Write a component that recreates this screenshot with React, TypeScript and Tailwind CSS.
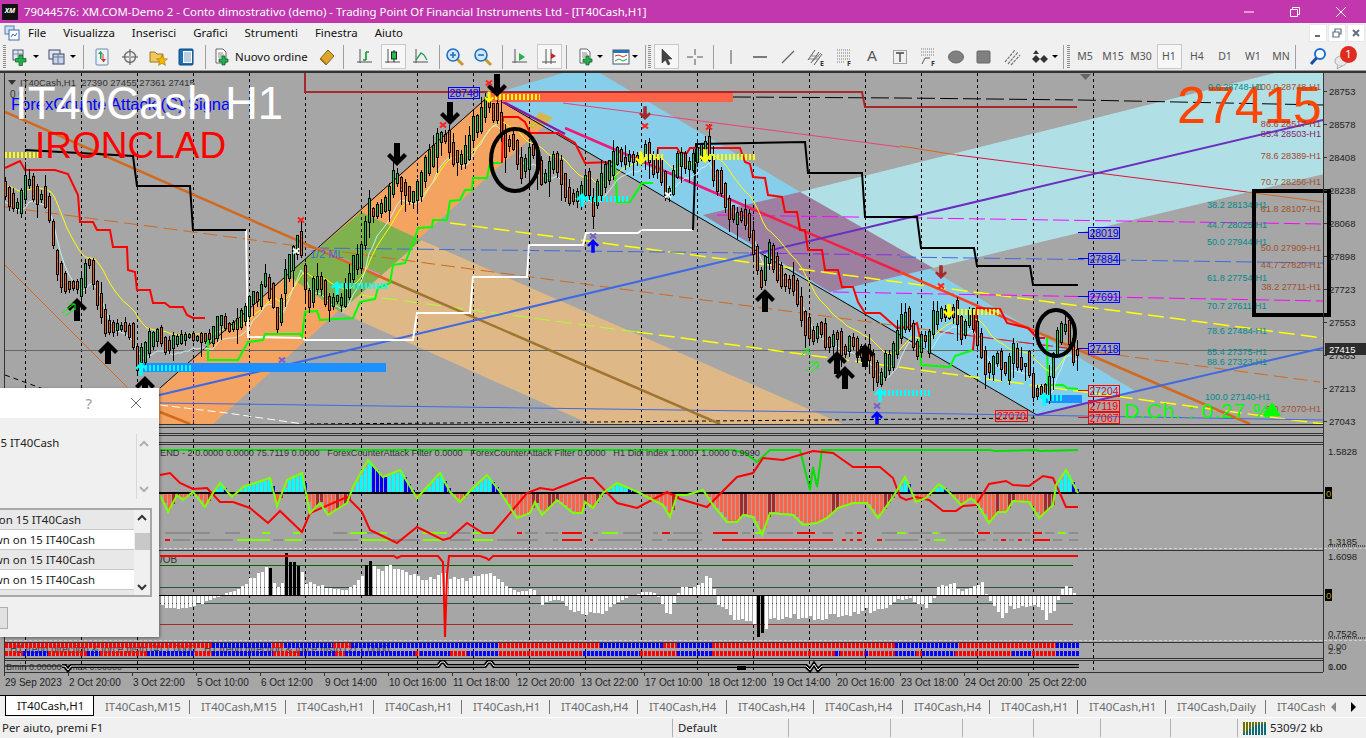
import React from "react";

type P = number[][];
const interp = (pts: P, x: number) => {
  if (x <= pts[0][0]) return pts[0][1];
  for (let i = 1; i < pts.length; i++) {
    if (x <= pts[i][0]) {
      const [a, b] = pts[i - 1];
      const [c, d] = pts[i];
      return b + ((d - b) * (x - a)) / (c - a || 1);
    }
  }
  return pts[pts.length - 1][1];
};
const hash = (n: number) => {
  const s = Math.sin(n * 12.9898) * 43758.5453;
  return s - Math.floor(s);
};
const pl = (p: P) => p.map((q) => q.join(",")).join(" ");

const KP: P = [[5,188],[10,198],[17,205],[22,200],[26,183],[30,182],[38,197],[46,197],[50,212],[53,233],[57,262],[62,278],[68,285],[77,285],[81,287],[89,262],[93,272],[97,293],[102,308],[106,325],[113,327],[122,327],[125,327],[133,335],[137,358],[145,352],[149,342],[157,335],[162,335],[166,348],[173,342],[182,338],[190,335],[197,338],[213,335],[222,318],[230,328],[237,323],[246,313],[253,298],[262,295],[265,280],[273,295],[277,318],[282,308],[286,272],[293,258],[297,245],[302,243],[306,288],[310,302],[315,282],[322,283],[325,292],[330,305],[337,298],[342,302],[350,282],[353,267],[362,255],[366,225],[369,210],[373,212],[382,208],[389,198],[393,182],[397,178],[402,185],[408,192],[413,197],[422,182],[426,165],[433,155],[437,145],[442,135],[450,142],[453,153],[462,160],[469,147],[473,128],[482,118],[485,107],[490,102],[493,112],[498,112],[502,128],[505,145],[509,143],[513,142],[518,155],[521,168],[525,165],[529,158],[533,150],[542,175],[546,178],[553,162],[557,162],[562,175],[566,188],[569,195],[573,197],[582,195],[586,182],[589,183],[593,207],[597,193],[602,182],[606,173],[609,170],[617,155],[621,155],[626,162],[629,158],[633,158],[642,158],[645,150],[649,152],[653,165],[657,165],[661,170],[665,183],[669,192],[673,182],[677,165],[682,157],[685,160],[689,165],[693,162],[697,155],[705,147],[709,148],[713,168],[717,180],[721,182],[725,195],[729,208],[733,212],[737,218],[741,215],[746,217],[749,225],[757,258],[761,278],[765,268],[769,252],[773,257],[777,268],[781,275],[785,280],[789,283],[793,283],[797,292],[801,308],[805,323],[809,328],[813,335],[817,332],[821,328],[825,335],[829,342],[833,340],[837,335],[841,343],[845,350],[849,343],[853,342],[857,348],[865,355],[869,352],[873,365],[877,372],[881,378],[885,365],[889,362],[893,355],[897,342],[902,322],[909,318],[913,335],[917,348],[925,338],[929,342],[933,322],[942,312],[949,315],[953,312],[957,312],[961,328],[965,328],[969,318],[973,318],[977,333],[981,345],[985,362],[989,368],[993,365],[997,358],[1001,360],[1005,368],[1009,368],[1013,353],[1017,358],[1021,363],[1025,365],[1029,363],[1033,385],[1037,392],[1041,390],[1045,390],[1049,388],[1057,342],[1061,333],[1065,328],[1069,332],[1073,350],[1077,352]];

const bars: { x: number; y: number; h: number; up: boolean; t: number; b: number }[] = [];
{
  for (let i = 0, x = 5; x <= 1077; x += 4, i++) {
    const c = interp(KP, x);
    const next = interp(KP, x + 4);
    const prev = interp(KP, x - 4);
    const slope = prev - next;
    const size = Math.max(2, Math.min(24, Math.abs(slope) * 1.1 + 2 + hash(i + 3) * 7));
    const up = Math.abs(slope) > 3 ? slope > 0 : hash(i + 7) > 0.5;
    const y = Math.round(c - size / 2) + 0.5;
    const h = Math.round(size);
    const t = y - 1 - Math.round(hash(i + 11) * 5) - (hash(i + 31) > 0.82 ? 8 : 0);
    const b = y + h + 1 + Math.round(hash(i + 17) * 5) + (hash(i + 47) > 0.82 ? 10 : 0);
    bars.push({ x, y, h, up, t, b });
  }
}
const yellow: P = [];
const pale: P = [];
{
  let e1 = 190;
  let e2 = 190;
  bars.forEach((k) => {
    const c = k.y + k.h / 2;
    e1 = e1 * 0.84 + c * 0.16;
    e2 = e2 * 0.68 + c * 0.32;
    yellow.push([k.x + 2, Math.round(e1 - 4)]);
    pale.push([k.x, Math.round(e2 + 11 + (hash(k.x + 5) - 0.5) * 3)]);
  });
}

const RED1: P = [[5,168],[20,161],[25,170],[55,170],[68,174],[78,195],[80,222],[93,222],[97,230],[110,230],[113,247],[127,247],[128,270],[135,272],[137,290],[150,290],[153,303],[165,303],[170,307],[183,307],[187,315],[193,318],[205,318]];
const RED2: P = [[502,163],[503,117],[518,117],[525,122],[530,133],[558,133],[575,143],[585,163],[613,162]];
const RED3: P = [[657,163],[658,148],[677,148],[680,153],[687,153],[690,148],[740,148],[745,162],[750,164],[753,177],[765,178],[768,195],[782,197],[785,212],[797,212],[800,230],[805,230],[808,250],[822,250],[825,270],[838,270],[842,287],[853,287],[858,302],[865,313],[880,313],[897,328],[910,327],[917,323],[920,338]];
const RED4: P = [[973,350],[977,308],[1000,309],[1007,323],[1028,328],[1037,338],[1045,338]];
const GR1: P = [[208,338],[208,360],[238,360],[248,342],[263,340],[265,334],[300,334],[302,337],[305,312],[317,311],[320,320],[353,318],[360,302],[375,299],[378,288],[390,283],[393,265],[405,263],[415,238],[418,228],[432,227],[433,220],[447,220],[450,201],[460,200],[465,190],[472,190],[473,178],[487,178],[490,163],[502,163]];
const GR2: P = [[615,163],[617,202],[630,202],[642,183],[653,183]];
const GR3: P = [[920,338],[921,365],[950,367],[955,356],[973,350]];
const GR4: P = [[1047,338],[1048,385],[1063,385],[1067,388],[1078,389]];
const WH: P = [[246,230],[248,337],[302,338],[305,340],[413,340],[417,313],[470,313],[473,277],[527,277],[529,245],[583,245],[586,233],[638,233],[642,230],[693,230]];
const BK1: P = [[25,150],[133,156],[137,186],[190,186],[193,230],[246,230]];
const BK2: P = [[693,230],[696,144],[752,143],[805,142],[808,173],[862,173],[865,217],[917,217],[921,248],[974,248],[977,266],[1030,266],[1033,285],[1078,285]];
const DR: P = [[305,71],[305,92],[862,92],[865,107],[1077,107]];

const RL: P = [[160,475],[170,473],[180,483],[193,489],[207,488],[220,502],[233,502],[250,508],[268,523],[280,511],[302,532],[310,513],[347,497],[362,512],[370,530],[397,543],[417,527],[443,540],[450,538],[467,523],[483,533],[493,533],[517,505],[527,493],[540,488],[553,490],[583,478],[593,478],[617,503],[637,508],[667,492],[680,499],[707,507],[737,477],[753,473],[763,458],[783,460],[813,451],[833,453],[853,467],[880,467],[893,478],[900,497],[906,500],[916,497],[929,500],[943,511],[956,511],[963,506],[976,505],[989,484],[1006,481],[1013,485],[1029,486],[1043,476],[1053,478],[1066,507],[1078,507]];
const LL: P = [[160,495],[168,512],[177,495],[183,500],[193,492],[205,507],[213,493],[220,483],[232,497],[243,487],[270,478],[277,506],[282,493],[287,480],[302,473],[310,513],[320,503],[328,515],[347,503],[353,487],[368,460],[383,477],[400,470],[417,498],[440,473],[450,492],[460,502],[473,488],[487,475],[500,492],[517,518],[530,513],[535,502],[542,515],[557,500],[573,513],[582,513],[585,502],[593,508],[603,493],[617,483],[640,493],[647,497],[663,505],[670,517],[677,495],[687,495],[703,490],[713,505],[727,522],[737,522],[743,515],[753,517],[762,535],[770,513],[793,515],[803,525],[817,523],[827,518],[838,508],[853,503],[867,503],[878,518],[893,497],[905,477],[916,502],[926,498],[939,484],[949,492],[961,505],[971,498],[978,505],[989,523],[998,512],[1006,512],[1013,501],[1029,502],[1039,518],[1053,505],[1056,485],[1066,470],[1078,493]];
const TOPG: P = [[160,450],[733,450],[745,453],[757,462],[770,450],[800,450],[810,490],[813,467],[817,487],[822,450],[990,450],[995,451],[1035,450],[1040,451],[1078,450]];

const hist: { x: number; v: number; col: string }[] = [];
{
  let prev = 0;
  for (let x = 160; x <= 1076; x += 4) {
    const v = Math.round((493 - interp(LL, x)) * 0.95);
    let col = "#ff6347";
    if (v >= 0) col = v < prev - 1 ? "#0000ff" : "#00ffff";
    else col = v > prev + 2 ? "#a52a2a" : "#ff6347";
    hist.push({ x, v, col });
    prev = v;
  }
}

const OBV: P = [[160,-10],[170,-15],[200,-8],[215,-3],[225,2],[240,7],[255,22],[265,28],[268,30],[275,6],[280,8],[285,40],[290,32],[298,32],[300,28],[305,10],[312,12],[325,7],[335,5],[345,5],[355,12],[362,18],[365,32],[369,32],[375,27],[385,27],[392,28],[400,24],[410,20],[420,16],[430,16],[440,20],[450,18],[460,14],[475,18],[490,20],[505,10],[515,3],[530,5],[535,6],[540,-10],[550,-5],[560,-5],[570,-15],[580,-18],[590,-20],[600,-20],[610,-12],[620,-5],[640,3],[645,3],[655,2],[660,-8],[665,-17],[670,-17],[675,-2],[680,8],[690,8],[700,10],[708,20],[712,10],[716,-8],[725,-15],[735,-25],[745,-25],[755,-28],[757,-42],[761,-40],[770,-25],[780,-22],[800,-22],[815,-25],[830,-20],[850,-18],[870,-15],[880,-15],[895,-5],[908,-3],[917,-10],[926,-12],[932,-6],[936,7],[952,12],[960,4],[970,7],[975,12],[982,12],[986,-3],[993,-10],[1000,-22],[1010,-10],[1015,-15],[1022,-12],[1035,-10],[1045,-22],[1055,-15],[1060,7],[1066,10],[1072,4],[1075,-3]];
const BLACKX = [268, 285, 289, 293, 297, 365, 369, 757, 761];

const row1 = [[5,212,"r"],[212,272,"b"],[272,284,"r"],[284,333,"b"],[333,351,"r"],[351,499,"b"],[499,600,"r"],[600,663,"b"],[663,677,"r"],[677,712,"b"],[712,895,"r"],[895,959,"b"],[959,1056,"r"],[1056,1080,"b"]] as [number,number,string][];
const row2 = [[5,23,"r"],[23,48,"b"],[48,87,"r"],[87,100,"b"],[100,147,"r"],[147,195,"b"],[195,212,"r"],[212,273,"b"],[273,300,"r"],[300,335,"b"],[335,345,"r"],[345,415,"b"],[415,420,"r"],[420,450,"b"],[450,467,"r"],[467,499,"b"],[499,583,"r"],[583,587,"b"],[587,640,"b"],[640,644,"r"],[644,677,"r"],[677,712,"b"],[712,835,"r"],[835,840,"b"],[840,865,"r"],[865,869,"b"],[869,895,"r"],[895,916,"b"],[916,922,"r"],[922,955,"b"],[955,1012,"r"],[1012,1032,"b"],[1032,1056,"r"],[1056,1080,"b"]] as [number,number,string][];

const G = "#8c8c8c", LM = "#7fff00", R = "#ff0000";
const dash1: [number, number, string][] = [[165,210,G],[225,240,G],[262,270,LM],[293,300,LM],[333,347,G],[350,367,LM],[367,377,G],[380,387,LM],[422,447,LM],[452,470,G],[473,493,LM],[517,522,R],[525,538,G],[545,558,G],[562,582,R],[593,598,G],[602,618,LM],[623,642,G],[653,658,G],[662,670,R],[673,702,G],[713,738,R],[742,750,G],[755,760,LM],[767,793,G],[797,815,R],[822,833,G],[845,853,G],[857,862,R],[882,897,G],[897,906,LM],[909,931,G],[933,938,LM],[941,974,G],[978,990,R],[993,1030,G],[1033,1042,R],[1045,1054,G],[1058,1066,LM],[1069,1078,G]];
const dash2: [number, number, string][] = [[165,170,R],[173,190,G],[193,233,G],[237,270,LM],[273,283,G],[285,302,LM],[305,358,G],[362,392,LM],[393,420,G],[423,443,LM],[450,470,G],[473,493,LM],[497,538,G],[553,558,G],[562,582,R],[590,593,R],[598,642,G],[652,662,G],[667,702,G],[722,833,R],[842,846,R],[850,853,R],[857,862,R],[877,882,R],[885,918,G],[926,930,G],[934,946,LM],[958,986,G],[993,998,G],[1001,1006,R],[1009,1014,G],[1018,1022,R],[1025,1030,G],[1033,1050,R],[1053,1062,G],[1069,1078,G]];

const GRIDX = [25.5,81.5,137.5,193.5,249.5,305.5,361.5,417.5,473.5,529.5,585.5,641.5,697.5,753.5,809.5,865.5,921.5,977.5,1033.5,1093.5];
const DATES = ["29 Sep 2023","2 Oct 20:00","3 Oct 22:00","5 Oct 10:00","6 Oct 12:00","9 Oct 14:00","10 Oct 16:00","11 Oct 18:00","12 Oct 20:00","13 Oct 22:00","17 Oct 10:00","18 Oct 12:00","19 Oct 14:00","20 Oct 16:00","23 Oct 18:00","24 Oct 20:00","25 Oct 22:00"];
const PRICES: [string, number][] = [["28753",91],["28578",124],["28408",157],["28238",190],["28068",223],["27898",256],["27723",289],["27553",322],["27383",355],["27213",388],["27043",421]];

const UpArrow = ({ x, y, s = 1, c = "#000" }: { x: number; y: number; s?: number; c?: string }) => (
  <polygon transform={`translate(${x} ${y}) scale(${s})`} fill={c} points="0,0 10,10 7,13 3,9 3,23 -3,23 -3,9 -7,13 -10,10" />
);
const DownArrow = ({ x, y, s = 1, c = "#000" }: { x: number; y: number; s?: number; c?: string }) => (
  <polygon transform={`translate(${x} ${y}) scale(${s})`} fill={c} points="0,0 10,-10 7,-13 3,-9 3,-23 -3,-23 -3,-9 -7,-13 -10,-10" />
);
const Cross = ({ x, y, c }: { x: number; y: number; c: string }) => (
  <path d={`M${x - 3} ${y - 2.5}L${x + 3} ${y + 2.5}M${x + 3} ${y - 2.5}L${x - 3} ${y + 2.5}`} stroke={c} strokeWidth={2} />
);
const Hatch = ({ x1, x2, y, c, h = 6 }: { x1: number; x2: number; y: number; c: string; h?: number }) => (
  <line x1={x1} x2={x2} y1={y} y2={y} stroke={c} strokeWidth={h} strokeDasharray="2 2" />
);
const Tag = ({ x, y, w, t, c }: { x: number; y: number; w: number; t: string; c: string }) => (
  <g>
    <rect x={x + 0.5} y={y + 0.5} width={w} height={11} fill="none" stroke={c} />
    <text x={x + w / 2 + 0.5} y={y + 10} textAnchor="middle" fontSize={10.5} fill={c}>{t}</text>
  </g>
);
const FIBT: [string, number, number][] = [["0.0 28748-H1",1208,90],["38.2 28134-H1",1207,208],["44.7 28025-H1",1207,228],["50.0 27944-H1",1207,245],["61.8 27754-H1",1207,281],["70.7 27611-H1",1207,309],["78.6 27484-H1",1207,334],["85.4 27375-H1",1207,355],["88.6 27323-H1",1207,365],["100.0 27140-H1",1205,400]];
const FIBS: [string, number, string][] = [["100.0 28748-H1",90,"#a0522d"],["86.6 28517-H1",127,"#b0322a"],["85.4 28503-H1",137,"#8b1a6b"],["78.6 28389-H1",159,"#a8452a"],["70.7 28256-H1",185,"#a0522d"],["61.8 28107-H1",212,"#a0522d"],["50.0 27909-H1",251,"#a0522d"],["44.7 27820-H1",268,"#a0522d"],["38.2 27711-H1",290,"#a0522d"],["0.0 27070-H1",412,"#a0522d"]];

const Chart = () => (
  <svg viewBox="0 71 1366 624" width={1366} height={624} className="block font-['Liberation_Sans',sans-serif]">
    <defs>
      <clipPath id="mainc"><rect x={5} y={73} width={1318.5} height={351} /></clipPath>
    </defs>
    <rect x={0} y={71} width={1366} height={624} fill="#a6a6a6" />
    <rect x={0} y={71} width={1366} height={2} fill="#333" />
    <g clipPath="url(#mainc)">
      <polygon points="120,424 490,95 553,118 213,424" fill="#f4a460" />
      <polygon points="421,240 843,424 590,424 340,312" fill="#deb887" />
      <polygon points="361,212 421,240 340,312 287,275" fill="#7fb24f" />
      <polygon points="490,95 563,73 600,73 1137,392 1037,415" fill="#87ceeb" />
      <polygon points="800,192 1275,73 1324,73 1324,174 933,268" fill="#b0e0e6" />
      <polygon points="703,215 800,192 933,268 830,292" fill="#9d80a0" />
      <polygon points="540,112 553,118 545,125 525,130" fill="#d4b84a" />
      <line x1={160} y1={388} x2={490} y2={95} stroke="#000" />
      <line x1={490} y1={95} x2={1037} y2={415} stroke="#000" />
      <line x1={5} y1={265} x2={127} y2={387} stroke="#d2691e" />
    </g>
    {GRIDX.map((x) => (
      <line key={x} x1={x} x2={x} y1={73} y2={672} stroke="#000" strokeDasharray="3 3" />
    ))}
    <line x1={193.5} x2={193.5} y1={360} y2={424} stroke="#6a1b9a" strokeDasharray="3 3" />
    <line x1={4} x2={1323} y1={350.5} y2={350.5} stroke="#666" />
    <g clipPath="url(#mainc)" fill="none">
      <line x1={563} y1={103} x2={900} y2={147} stroke="#e8437a" />
      <line x1={900} y1={146} x2={957} y2={155} stroke="#d2691e" />
      <line x1={957} y1={155} x2={1247} y2={192} stroke="#dc143c" />
      <line x1={1247} y1={192} x2={1323} y2={202} stroke="#d2691e" />
      <line x1={5} y1={207} x2={1320} y2={382} stroke="#d2691e" strokeDasharray="14 6" />
      <line x1={450} y1={223} x2={1323} y2={338} stroke="#ffff00" strokeWidth={1.5} strokeDasharray="16 6" />
      <line x1={360} y1={295} x2={637} y2={332} stroke="#adff2f" strokeDasharray="16 6" />
      <line x1={637} y1={332} x2={1323} y2={424} stroke="#ffff00" strokeWidth={1.5} strokeDasharray="16 6" />
      <line x1={313} y1={248} x2={750} y2={253} stroke="#4169e1" strokeDasharray="16 5" />
      <line x1={750} y1={253} x2={900} y2={255} stroke="#8a2be2" strokeDasharray="16 5" />
      <line x1={900} y1={257} x2={1323} y2={263} stroke="#4169e1" strokeDasharray="16 5" />
      <line x1={717} y1={215} x2={1323} y2={224} stroke="#ff00ff" strokeDasharray="16 5" />
      <line x1={833} y1={292} x2={1323} y2={301} stroke="#ff00ff" strokeDasharray="16 5" />
      <line x1={316} y1={248} x2={380} y2={275} stroke="#ee82ee" strokeWidth={2} />
      <line x1={160} y1={403} x2={900} y2={413} stroke="#4169e1" />
      <line x1={900} y1={413} x2={1323} y2={420} stroke="#4169e1" />
      <polyline points="5,375 60,395 90,410" stroke="#000" strokeDasharray="5 4" />
      <polyline points="160,405 227,413 303,424" stroke="#fff" strokeDasharray="8 4" />
      <polyline points="303,424 600,422 1037,418" stroke="#000" strokeDasharray="4 3" />
      <polyline points="733,97 900,98 1080,100 1323,105" stroke="#000" strokeDasharray="18 5" />
      <line x1={940} y1={332} x2={1067} y2={348} stroke="#dc143c" strokeDasharray="14 6" />
      <line x1={5} y1={112} x2={390} y2={281} stroke="#d2691e" strokeWidth={2.5} />
      <line x1={390} y1={281} x2={720} y2={424} stroke="#a0752f" strokeWidth={2.5} />
      <line x1={160} y1={412} x2={190} y2={424} stroke="#d2691e" strokeWidth={2.5} />
      <line x1={490} y1={95} x2={565} y2={134} stroke="#8b1aa0" strokeWidth={2.5} />
      <line x1={565} y1={128} x2={750} y2={208} stroke="#f01878" strokeWidth={2.5} />
      <line x1={750} y1={208} x2={900} y2={272} stroke="#f0204a" strokeWidth={2.5} />
      <line x1={900} y1={272} x2={1037} y2={332} stroke="#ff4020" strokeWidth={2.5} />
      <line x1={1037} y1={332} x2={1250} y2={424} stroke="#d2691e" strokeWidth={2.5} />
      <line x1={130} y1={402} x2={750} y2={255} stroke="#4169e1" strokeWidth={2} />
      <line x1={750} y1={255} x2={1323} y2={120} stroke="#6a2fc0" strokeWidth={2} />
      <line x1={1037} y1={415} x2={1120} y2={395} stroke="#6a2fc0" strokeWidth={2} />
      <line x1={1120} y1={395} x2={1323} y2={348} stroke="#4169e1" strokeWidth={2} />
      <polyline points={pl(DR)} stroke="#a52a2a" strokeWidth={2} />
    </g>
    <rect x={140} y={363} width={246} height={9} fill="#1e90ff" />
    <rect x={490} y={93} width={243} height={9} fill="#ff6347" />
    <rect x={1043} y={395} width={39} height={8} fill="#1e90ff" />
    <polyline points={pl(WH)} fill="none" stroke="#fff" strokeWidth={2} />
    <polyline points={pl(BK1)} fill="none" stroke="#000" strokeWidth={2} />
    <polyline points={pl(BK2)} fill="none" stroke="#000" strokeWidth={2} />
    {[GR1, GR2, GR3, GR4].map((p, i) => (
      <polyline key={i} points={pl(p)} fill="none" stroke="#00ff00" strokeWidth={2} />
    ))}
    {[RED1, RED2, RED3, RED4].map((p, i) => (
      <polyline key={i} points={pl(p)} fill="none" stroke="#ff0000" strokeWidth={2} />
    ))}
    <g>
      <polyline points={pl(yellow)} fill="none" stroke="#ffff00" />
      <polyline points={pl(pale)} fill="none" stroke="#c5f0f0" />
      {bars.map((k) => (
        <g key={k.x} shapeRendering="crispEdges">
          <line x1={k.x + 0.5} x2={k.x + 0.5} y1={k.t} y2={k.b} stroke="#000" />
          <rect x={k.x - 0.5} y={k.y} width={2} height={k.h} fill={k.up ? "#19c24a" : "#e0601c"} stroke="#000" />
        </g>
      ))}
    </g>
    <Hatch x1={5} x2={40} y={155} c="#ffff00" />
    <Hatch x1={495} x2={540} y={97} c="#ffff00" />
    <Hatch x1={641} x2={665} y={157} c="#ffff00" />
    <Hatch x1={705} x2={755} y={157} c="#ffff00" />
    <Hatch x1={957} x2={1000} y={312} c="#ffff00" />
    <Hatch x1={141} x2={192} y={368} c="#00ffff" />
    <Hatch x1={337} x2={388} y={286} c="#00ffff" />
    <Hatch x1={582} x2={630} y={199} c="#00ffff" />
    <Hatch x1={880} x2={930} y={393} c="#00ffff" />
    <Hatch x1={1044} x2={1062} y={398} c="#00ffff" />
    <UpArrow x={77} y={298} />
    <UpArrow x={108} y={341} />
    <UpArrow x={145} y={376} />
    <UpArrow x={765} y={289} />
    <UpArrow x={837} y={351} />
    <UpArrow x={845} y={366} />
    <UpArrow x={865} y={344} />
    <DownArrow x={397} y={166} />
    <DownArrow x={450} y={125} />
    <DownArrow x={497} y={97} />
    <DownArrow x={489} y={103} s={0.5} c="#ffff00" />
    <DownArrow x={641} y={165} s={0.6} c="#ffff00" />
    <DownArrow x={705} y={163} s={0.6} c="#ffff00" />
    <DownArrow x={949} y={318} s={0.6} c="#ffff00" />
    <UpArrow x={141} y={362} s={0.6} c="#00ffff" />
    <UpArrow x={337} y={281} s={0.6} c="#00ffff" />
    <UpArrow x={582} y={193} s={0.6} c="#00ffff" />
    <UpArrow x={880} y={388} s={0.6} c="#00ffff" />
    <UpArrow x={1044} y={392} s={0.6} c="#00ffff" />
    <UpArrow x={593} y={239} s={0.6} c="#0000ff" />
    <UpArrow x={877} y={411} s={0.6} c="#0000ff" />
    <DownArrow x={645} y={120} s={0.6} c="#a52a2a" />
    <DownArrow x={941} y={279} s={0.6} c="#a52a2a" />
    <Cross x={301} y={220} c="#ff2020" />
    <Cross x={443} y={125} c="#ff2020" />
    <Cross x={489} y={83} c="#ff2020" />
    <Cross x={645} y={126} c="#ff2020" />
    <Cross x={709} y={127} c="#ff2020" />
    <Cross x={941} y={286} c="#ff2020" />
    <Cross x={282} y={360} c="#7a5bd0" />
    <Cross x={593} y={236} c="#7a5bd0" />
    <Cross x={877} y={406} c="#7a5bd0" />
    <Cross x={296} y={251} c="#ffffff" />
    <Cross x={668} y={195} c="#ffffff" />
    <path d="M62 313L74 304M68 304H75V310M65 316L75 309" fill="none" stroke="#00ff00" />
    <path d="M801 356L808 349M803 349H809V355" fill="none" stroke="#00ff00" />
    <path d="M806 371L817 362M809 362H818V369M811 373L818 366" fill="none" stroke="#00ff00" />
    <ellipse cx={515} cy={160} rx={24} ry={31} fill="none" stroke="#000" strokeWidth={4} />
    <ellipse cx={1056} cy={333} rx={19} ry={23} fill="none" stroke="#000" strokeWidth={4} />

    <text x={20} y={86} fontSize={9.5} fill="#333" xmlSpace="preserve">IT40Cash,H1  27390 27455 27361 27415</text>
    <polygon points="8,80 16,80 12,85" fill="#333" />
    <polygon points="1080,74 1091,74 1085.5,80" fill="#666" />
    <text x={10} y={98} fontSize={10} fill="#333">0  0</text>
    <text x={11} y={110} fontSize={16.5} fill="#0000ff">ForexCounte Attack (C) Signal</text>
    <text x={15} y={119} fontSize={45.5} fill="#fff">IT40Cash H1</text>
    <text x={35} y={158} fontSize={37} fill="#ff0000">IRONCLAD</text>
    <text x={1177} y={123} fontSize={52} fill="#ff4500">27415</text>
    <text x={310} y={258} fontSize={11} fill="#4169e1">1/2 ML</text>
    {FIBT.map(([t, x, y]) => (
      <text key={t} x={x} y={y} fontSize={9.1} fill="#008b8b">{t}</text>
    ))}
    {FIBS.map(([t, y, c]) => (
      <text key={t} x={1321} y={y} textAnchor="end" fontSize={9.1} fill={c}>{t}</text>
    ))}
    <line x1={1078} x2={1088} y1={232.5} y2={232.5} stroke="#0000ff" />
    <line x1={1078} x2={1088} y1={258.5} y2={258.5} stroke="#0000ff" />
    <line x1={1078} x2={1088} y1={296.5} y2={296.5} stroke="#0000ff" />
    <line x1={1078} x2={1088} y1={348.5} y2={348.5} stroke="#0000ff" />
    <line x1={1078} x2={1088} y1={390.5} y2={390.5} stroke="#ff0000" />
    <line x1={1078} x2={1088} y1={417.5} y2={417.5} stroke="#ff0000" />
    <Tag x={448} y={87} w={31} t="28748" c="#0000ff" />
    <Tag x={1088} y={227} w={31} t="28019" c="#0000ff" />
    <Tag x={1088} y={253} w={31} t="27884" c="#0000ff" />
    <Tag x={1088} y={291} w={31} t="27691" c="#0000ff" />
    <Tag x={1088} y={343} w={31} t="27418" c="#0000ff" />
    <Tag x={1088} y={385} w={31} t="27204" c="#ff0000" />
    <Tag x={1088} y={400} w={31} t="27119" c="#ff0000" />
    <Tag x={1088} y={412} w={31} t="27067" c="#ff0000" />
    <Tag x={995} y={410} w={32} t="27070" c="#ff0000" />
    <text x={1124} y={418} fontSize={21} letterSpacing={0.8} fill="#00ff00">D.Ch. : 0.27 %</text>
    <polygon points="1272,402 1281,416 1263,416" fill="#00ff00" />
    <rect x={1254} y={191} width={75} height={124} fill="none" stroke="#000" strokeWidth={4} />

    {[424.5,427.5,433.5,435.5,442.5,444.5,550.5,642.5,658.5,660.5,672.5].map((y) => (
      <line key={y} x1={4} x2={1323} y1={y} y2={y} stroke="#333" />
    ))}
    {[548.5,640.5].map((y) => (
      <line key={y} x1={4} x2={1366} y1={y} y2={y} stroke="#d0d0d0" strokeDasharray="3 2" />
    ))}
    <line x1={4.5} x2={4.5} y1={73} y2={672} stroke="#333" />
    <line x1={1323.5} x2={1323.5} y1={73} y2={672} stroke="#333" />

    {hist.map((h) => (
      <rect key={h.x} x={h.x} y={h.v > 0 ? 493 - h.v : 493} width={3} height={Math.abs(h.v)} fill={h.col} />
    ))}
    {dash1.map(([a, b, c]) => (
      <line key={a} x1={a} x2={b} y1={533} y2={533} stroke={c} strokeWidth={2} />
    ))}
    {dash2.map(([a, b, c]) => (
      <line key={a} x1={a} x2={b} y1={540} y2={540} stroke={c} strokeWidth={2} />
    ))}
    <line x1={5} x2={1323} y1={493} y2={493} stroke="#000" strokeWidth={2} />
    <polyline points={pl(TOPG)} fill="none" stroke="#00e000" strokeWidth={2} />
    <polyline points={pl(RL)} fill="none" stroke="#ff0000" strokeWidth={2} />
    <polyline points={pl(LL)} fill="none" stroke="#7fff00" strokeWidth={2} />
    <text x={160} y={456} fontSize={9.2} fill="#333" xmlSpace="preserve">END - 2 0.0000 0.0000 75.7119 0.0000   ForexCounterAttack Filter 0.0000   ForexCounterAttack Filter 0.0000   H1 Didi index 1.0007 1.0000 0.9990</text>

    <text x={160} y={563} fontSize={10} fill="#333">/OB</text>
    <line x1={160} x2={1073} y1={565.5} y2={565.5} stroke="#006400" />
    <line x1={160} x2={1073} y1={587.5} y2={587.5} stroke="#2f4f4f" />
    <line x1={160} x2={1073} y1={603.5} y2={603.5} stroke="#2f4f4f" />
    <line x1={160} x2={1073} y1={624.5} y2={624.5} stroke="#a52a2a" />
    {Array.from({ length: 229 }, (_, i) => 161 + i * 4).map((x) => {
      const raw = interp(OBV, x);
      const v = Math.round(raw + (hash(x) - 0.5) * Math.min(6, Math.abs(raw) * 0.4));
      const black = BLACKX.some((b) => Math.abs(b - x) <= 1);
      return <rect key={x} x={x} y={v > 0 ? 595 - v : 595} width={3} height={Math.abs(v)} fill={black ? "#000" : "#fff"} />;
    })}
    <line x1={5} x2={1323} y1={595.5} y2={595.5} stroke="#000" />
    <polyline points="160,556 394,556 397,558 401,556 438,556 443,562 445,637 447,575 449,556 480,556 486,558 489,560 493,556 1078,556" fill="none" stroke="#ff0000" strokeWidth={2} />

    <text x={10} y={653} fontSize={10} fill="#444" xmlSpace="preserve">H1 trend direction &amp; force histo (4) 1.0000   H1 trend direction &amp; force histo (2) 1.0000</text>
    {[row1, row2].map((row, ri) => (
      <g key={ri}>
        {row.map(([a, b, c]) => (
          <line key={a} x1={a} x2={b} y1={ri ? 653.5 : 645.5} y2={ri ? 653.5 : 645.5} stroke={c === "r" ? "#ff0000" : "#0000ff"} strokeWidth={5} strokeDasharray="3 1" />
        ))}
      </g>
    ))}

    <text x={6} y={670} fontSize={9} fill="#333">Bmin 0.00000   Bmax 0.00000</text>
    {[["#000", 4], ["#fff", 1]].map(([c, w]) => (
      <polyline key={String(c)} points="62,666 65,666 68,670 71,666 438,666 441,662 444,662 447,666 485,666 488,662 491,662 494,666 806,666 810,670 814,664 818,670 822,666 1079,666" fill="none" stroke={String(c)} strokeWidth={Number(w)} />
    ))}
    <line x1={5} x2={62} y1={666} y2={666} stroke="#000" strokeWidth={1} />
    <rect x={737} y={666} width={9} height={4} fill="#000" />

    {PRICES.map(([t, y]) => (
      <g key={t}>
        <line x1={1323} x2={1327} y1={y + 0.5} y2={y + 0.5} stroke="#333" />
        <text x={1329} y={y + 4} fontSize={9.5} fill="#222">{t}</text>
      </g>
    ))}
    <rect x={1325} y={343} width={41} height={12} fill="#2b2b2b" />
    <text x={1329} y={353} fontSize={9.5} fill="#fff">27415</text>
    <text x={1328} y={455} fontSize={9.5} fill="#222">1.5828</text>
    <text x={1328} y={545} fontSize={9.5} fill="#222">1.3185</text>
    <line x1={1328} x2={1366} y1={546} y2={546} stroke="#555" strokeWidth={2} strokeDasharray="1 1" />
    <text x={1328} y={560} fontSize={9.5} fill="#222">1.6098</text>
    <text x={1328} y={637} fontSize={9.5} fill="#222">0.7526</text>
    <line x1={1328} x2={1366} y1={638} y2={638} stroke="#555" strokeWidth={2} strokeDasharray="1 1" />
    <rect x={1325} y={487} width={7} height={12} fill="#000" />
    <text x={1326} y={497} fontSize={9.5} fill="#b8a000">0</text>
    <rect x={1325} y={589} width={7} height={12} fill="#000" />
    <text x={1326} y={599} fontSize={9.5} fill="#b8a000">0</text>
    <text x={1328} y={650} fontSize={9.5} fill="#333">0.00</text>
    <text x={1328} y={654} fontSize={9.5} fill="#333">2.5</text>
    <text x={1328} y={670} fontSize={9.5} fill="#333">0.00</text>
    <text x={1328} y={670} fontSize={9.5} fill="#333">1.00</text>

    {DATES.map((d, i) => (
      <g key={d}>
        <line x1={4.5 + i * 64} x2={4.5 + i * 64} y1={672} y2={676} stroke="#333" />
        <text x={5 + i * 64} y={686} fontSize={10} fill="#222">{d}</text>
      </g>
    ))}
  </svg>
);

const Doc = ({ children }: { children?: React.ReactNode }) => (
  <>
    <path d="M4 2H11L14 5V16H4Z" fill="#fff" stroke="#666" />
    <path d="M6 6H11M6 8H12M6 10H12" stroke="#888" />
    {children}
  </>
);
const Plus = () => <path d="M10 9H13V12H16V15H13V18H10V15H7V12H10Z" fill="#22b14c" stroke="#0c5c25" strokeWidth={0.7} />;
const Axes = () => <path d="M5 2V16M2 15H17" stroke="#555" fill="none" />;
const Ico = ({ children }: { children?: React.ReactNode }) => (
  <svg viewBox="0 0 20 20" width={20} height={20}>{children}</svg>
);
const Dd = ({ className }: { className: string }) => (
  <svg viewBox="0 0 8 20" width={8} height={20} className={className}><path d="M1 8H7L4 11Z" fill="#000" /></svg>
);
const Sep = ({ className }: { className: string }) => <div className={`w-px h-[24px] bg-[#a0a0a0] ${className}`} />;
const Grip = ({ className }: { className: string }) => (
  <div className={`w-[3px] h-[24px] ${className} bg-[repeating-linear-gradient(to_bottom,#8a8a8a_0_1px,#f0f0f0_1px_2px)]`} />
);
const Tb = ({ children, className = "", on = false }: { children?: React.ReactNode; className?: string; on?: boolean }) => (
  <div className={`w-[28px] h-[26px] shrink-0 flex items-center justify-center text-[#333] ${className}`}>
    {on ? <div className="w-[25px] h-[25px] flex items-center justify-center bg-[#f7f7f7] border border-[#c8c8c8]">{children}</div> : children}
  </div>
);
const Tf = ({ t, on }: { t: string; on?: boolean }) => (
  <Tb on={on}><span className="text-[10.5px] text-[#555]">{t}</span></Tb>
);

const Toolbar = () => (
  <div className="h-[28px] flex items-center bg-[#f0f0f0] border-b border-[#9a9a9a] shrink-0">
    <Grip className="ml-[3px]" />
    <div className="w-[24px] flex justify-center ml-[2px]"><Ico><rect x={3} y={3} width={10} height={10} fill="#dfe9f5" stroke="#557" /><path d="M3 7H13M8 3V13" stroke="#7a8a9a" /><path d="M9 8H12.5V11.5H16V15H12.5V18.5H9V15H5.5V11.5H9Z" fill="#22b14c" stroke="#0c5c25" strokeWidth={0.7} /></Ico></div>
    <Dd className="" />
    <div className="w-[24px] flex justify-center ml-[5px]"><Ico><rect x={2} y={3} width={11} height={9} fill="#dfe9f5" stroke="#446" /><rect x={6} y={7} width={11} height={10} fill="#c5d5ea" stroke="#446" /><path d="M6 10H17M11 7V17" stroke="#6a7a8a" /></Ico></div>
    <Dd className="" />
    <Sep className="ml-[6px]" />
    <Tb className="ml-[4px]"><Ico><rect x={4} y={2} width={12} height={16} rx={1} fill="#eaf3fb" stroke="#6a8aa8" /><path d="M8 12V7H6L8.5 4L11 7H9.5V12Z" fill="#22a04a" /><path d="M11.5 7V12H14L11.5 15.5L9 12H10.5V7Z" fill="#e03020" /></Ico></Tb>
    <Tb><Ico><circle cx={10} cy={10} r={5.5} fill="none" stroke="#777" strokeWidth={1.5} /><path d="M10 2V18M2 10H18" stroke="#555" /><circle cx={10} cy={10} r={1.5} fill="#aaa" /></Ico></Tb>
    <Tb><Ico><path d="M2 5H7L9 7H15V15H2Z" fill="#f0c860" stroke="#a07820" /><path d="M14 8L15.6 11.6L19.4 12L16.5 14.5L17.4 18.4L14 16.3L10.6 18.4L11.5 14.5L8.6 12L12.4 11.6Z" fill="#f4b400" stroke="#a07000" strokeWidth={0.6} /></Ico></Tb>
    <Tb><Ico><rect x={3} y={2} width={14} height={16} rx={1} fill="#1a6fb8" stroke="#0d4a80" /><rect x={7} y={4} width={9} height={12} fill="#fff" /><path d="M8 6H15M8 8H15M8 10H15M8 12H15M8 14H15" stroke="#7a9cc0" /></Ico></Tb>
    <Sep className="ml-[5px]" />
    <div className="w-[103px] h-[26px] flex items-center ml-[4px] gap-[3px] pl-[2px]">
      <Ico><Doc /><Plus /></Ico>
      <span className="text-[11.4px] text-[#111] whitespace-nowrap">Nuovo ordine</span>
    </div>
    <Tb><Ico><path d="M3 12L11 3L17 9L9 18Z" fill="#dca52c" stroke="#8a5d10" /><path d="M3 12L9 18L9 16L4 11Z" fill="#a87818" /></Ico></Tb>
    <Sep className="ml-[2px]" />
    <Tb className="ml-[7px]"><Ico><Axes /><path d="M11 5V13M11 5H14M8 13H11" stroke="#0c9c2c" strokeWidth={1.6} fill="none" /></Ico></Tb>
    <Tb on><Ico><Axes /><path d="M11 3V15" stroke="#222" /><rect x={8.5} y={5} width={5} height={7} fill="#22c04c" stroke="#222" /></Ico></Tb>
    <Tb><Ico><Axes /><path d="M5 13L10 6L13 8L16 13" stroke="#2a9c5c" fill="none" strokeWidth={1.3} /></Ico></Tb>
    <Sep className="ml-[4px]" />
    <Tb className="ml-[1px]"><Ico><path d="M12 12L18 18" stroke="#c99a2a" strokeWidth={3} /><circle cx={8} cy={8} r={6} fill="#d0e6fa" stroke="#2070c0" strokeWidth={1.6} /><path d="M5 8H11M8 5V11" stroke="#2070c0" strokeWidth={1.6} /></Ico></Tb>
    <Tb><Ico><path d="M12 12L18 18" stroke="#c99a2a" strokeWidth={3} /><circle cx={8} cy={8} r={6} fill="#d0e6fa" stroke="#2070c0" strokeWidth={1.6} /><path d="M5 8H11" stroke="#2070c0" strokeWidth={1.6} /></Ico></Tb>
    <Sep className="ml-[5px]" />
    <Tb className="ml-[3px]"><Ico><Axes /><path d="M9 6L15 10L9 14Z" fill="#22b14c" /></Ico></Tb>
    <Tb className="ml-[1px]" on><Ico><path d="M7 2V17M3 15H17M12 2V17" stroke="#555" fill="none" /><path d="M17 9L12 6V12Z" fill="#d02020" /></Ico></Tb>
    <Sep className="ml-[3px]" />
    <div className="w-[20px] flex justify-center ml-[9px]"><Ico><Doc /><Plus /></Ico></div>
    <Dd className="" />
    <div className="w-[20px] flex justify-center ml-[7px]"><Ico><rect x={2} y={3} width={16} height={14} fill="#fff" stroke="#456" /><rect x={2} y={3} width={16} height={3} fill="#2a70b8" /><path d="M4 9L8 8L12 10L16 8" stroke="#d03020" fill="none" /><path d="M4 14L8 12L12 14L16 12" stroke="#22a04a" fill="none" /></Ico></div>
    <Dd className="" />
    <Sep className="ml-[6px]" />
    <Grip className="ml-[2px]" />
    <Tb className="ml-[1px]" on><Ico><path d="M6 2L6 16L9.5 13L12 18L14 17L11.5 12L16 12Z" fill="#444" stroke="#222" strokeWidth={0.5} /></Ico></Tb>
    <Tb className="ml-[1px]"><Ico><path d="M10 2V8M10 12V18M2 10H8M12 10H18" stroke="#555" /></Ico></Tb>
    <Sep className="ml-[4px]" />
    <Tb className="ml-[3px]"><Ico><path d="M10 3V17" stroke="#555" /></Ico></Tb>
    <Tb className="ml-[1px]"><Ico><path d="M3 10H17" stroke="#555" strokeWidth={1.5} /></Ico></Tb>
    <Tb><Ico><path d="M4 16L16 4" stroke="#666" strokeWidth={1.2} /></Ico></Tb>
    <Tb><Ico><path d="M2 13L9 3M5 16L13 5M8 18L16 7" stroke="#555" fill="none" /><path d="M4 9L13 9M3 12L12 12M7 14L15 6" stroke="#888" /><text x={14} y={19} fontSize={7} fontWeight={700} fill="#333">E</text></Ico></Tb>
    <Tb><Ico><path d="M3 3H16M3 6H16M3 9H16M3 12H16M3 15H11" stroke="#777" strokeDasharray="1 1" /><text x={13} y={19} fontSize={7} fontWeight={700} fill="#333">F</text></Ico></Tb>
    <Tb><span className="text-[15px] text-[#555] font-['Liberation_Sans',sans-serif]">A</span></Tb>
    <Tb><Ico><rect x={3.5} y={3.5} width={13} height={13} fill="none" stroke="#555" strokeDasharray="1 1" /><path d="M6 6H14M10 6V15" stroke="#444" strokeWidth={1.3} /></Ico></Tb>
    <Tb><Ico><path d="M3 2H16M3 5H16M3 8H16" stroke="#777" strokeDasharray="1 1" /><path d="M4 17L7 11H12" stroke="#555" fill="none" /><text x={13} y={19} fontSize={7} fontWeight={700} fill="#333">F</text></Ico></Tb>
    <Tb><Ico><ellipse cx={10} cy={10} rx={7.5} ry={6} fill="#808080" stroke="#666" /></Ico></Tb>
    <Tb><Ico><rect x={3} y={4} width={13} height={12} rx={1} fill="#808080" stroke="#666" /></Ico></Tb>
    <Tb><Ico><path d="M3 15L13 3M6 17L16 5M9 18L18 8" stroke="#777" strokeWidth={1.2} strokeDasharray="3 1" /></Ico></Tb>
    <div className="w-[20px] flex justify-center ml-[4px]"><Ico><path d="M6 3L9 7H3Z M6 8L10 12L6 16L2 12Z" fill="#333" /><path d="M14 8L18 12L14 16L10 12Z" fill="#333" /></Ico></div>
    <Dd className="ml-px" />
    <Sep className="ml-[4px]" />
    <Grip className="ml-[3px]" />
    <Tb className="ml-[1px]"><Tf t="M5" /></Tb>
    <Tb><Tf t="M15" /></Tb>
    <Tb><Tf t="M30" /></Tb>
    <Tf t="H1" on />
    <Tb><Tf t="H4" /></Tb>
    <Tb><Tf t="D1" /></Tb>
    <Tb><Tf t="W1" /></Tb>
    <Tb><Tf t="MN" /></Tb>
    <Sep className="" />
    <Tb className="ml-[8px]"><Ico><circle cx={12} cy={7} r={5} fill="#fff" stroke="#1a6fd0" strokeWidth={2} /><path d="M8.5 11L3 17" stroke="#1a4fa0" strokeWidth={3} /></Ico></Tb>
    <div className="relative w-[28px] h-[26px]">
      <svg viewBox="0 0 28 26" width={28} height={26}><ellipse cx={9} cy={17} rx={6} ry={5} fill="#e8e8e8" stroke="#aaa" /><path d="M6 21L5 25L10 22" fill="#e8e8e8" stroke="#aaa" /></svg>
      <div className="absolute left-[8px] top-[2px] w-[17px] h-[17px] rounded-full bg-[#e02b20] text-white text-[11px] flex items-center justify-center">1</div>
    </div>
  </div>
);

const MENU = ["File", "Visualizza", "Inserisci", "Grafici", "Strumenti", "Finestra", "Aiuto"];
const Menu = () => (
  <div className="h-[20px] flex items-center bg-[#f0f0f0] shrink-0 text-[11.4px] text-[#111] relative">
    <svg viewBox="0 0 16 16" width={16} height={16} className="ml-[4px]"><rect x={1} y={1} width={9} height={8} fill="#cfe0f5" stroke="#5a7ab0" /><rect x={5} y={5} width={10} height={10} fill="#fff" stroke="#3a6ab0" /><path d="M7 12L9 9L11 11L13 8" stroke="#3a6ab0" fill="none" /></svg>
    <div className="flex gap-[17px] ml-[8px]">
      {MENU.map((m) => <span key={m}>{m}</span>)}
    </div>
    <div className="ml-auto mr-[1px] flex gap-[1px]">
      {["min", "res", "close"].map((k) => (
        <div key={k} className="w-[18px] h-[18px] bg-white border border-[#e8e8e8] flex items-center justify-center">
          <svg viewBox="0 0 10 10" width={10} height={10}>
            {k === "min" && <rect x={2} y={7} width={5} height={2} fill="#607080" />}
            {k === "res" && <path d="M1 4H7V9H1ZM3 4V1H9V6H7" fill="none" stroke="#607080" strokeWidth={1.2} />}
            {k === "close" && <path d="M2 2L8 8M8 2L2 8" stroke="#607080" strokeWidth={2} />}
          </svg>
        </div>
      ))}
    </div>
  </div>
);

const Title = () => (
  <div className="h-[23px] bg-[#c237ae] flex items-center shrink-0 text-white">
    <div className="ml-[2px] w-[16px] h-[16px] bg-[#111] flex items-center justify-center text-[7px] italic font-bold text-white">XM</div>
    <span className="ml-[6px] text-[11.4px] whitespace-nowrap">79044576: XM.COM-Demo 2 - Conto dimostrativo (demo) - Trading Point Of Financial Instruments Ltd - [IT40Cash,H1]</span>
    <div className="ml-auto flex items-center">
      <svg viewBox="0 0 10 10" width={10} height={10} className="mr-[36px]"><path d="M0 5H10" stroke="#fff" /></svg>
      <svg viewBox="0 0 10 10" width={10} height={10} className="mr-[36px]"><path d="M0.5 2.5H7.5V9.5H0.5ZM2.5 2.5V0.5H9.5V7.5H7.5" fill="none" stroke="#fff" /></svg>
      <svg viewBox="0 0 10 10" width={10} height={10} className="mr-[20px]"><path d="M0 0L10 10M10 0L0 10" stroke="#fff" /></svg>
    </div>
  </div>
);

const Chevron = ({ up, c = "#b0b0b0" }: { up?: boolean; c?: string }) => (
  <svg viewBox="0 0 10 8" width={10} height={8}>
    <path d={up ? "M1 6L5 2L9 6" : "M1 2L5 6L9 2"} fill="none" stroke={c} strokeWidth={2} />
  </svg>
);

const Dialog = () => (
  <div className="absolute left-0 top-[317px] w-[159px] h-[249px] bg-[#f0f0f0] flex flex-col overflow-hidden shadow-[1px_1px_3px_rgba(0,0,0,0.4)] text-[11.4px] text-[#222] font-['Noto_Sans',sans-serif]">
    <div className="h-[30px] bg-white flex items-center justify-end shrink-0">
      <span className="text-[15px] text-[#999] mr-[38px]">?</span>
      <svg viewBox="0 0 12 12" width={12} height={12} className="mr-[17px]"><path d="M1 1L11 11M11 1L1 11" stroke="#666" /></svg>
    </div>
    <div className="flex h-[66px] mt-[16px] shrink-0">
      <span className="ml-[-6px] whitespace-nowrap">15 IT40Cash</span>
      <div className="ml-auto mr-[9px] w-[14px] h-[65px] border-l border-[#d8d8d8] flex flex-col items-center justify-between py-[6px]">
        <Chevron up /><Chevron />
      </div>
    </div>
    <div className="mt-[8px] w-[152px] h-[89px] border-2 border-[#a8a8a8] border-l-0 flex bg-white shrink-0">
      <div className="flex-1 overflow-hidden">
        {["Up on 15 IT40Cash", "Down on 15 IT40Cash", "Down on 15 IT40Cash", "Down on 15 IT40Cash"].map((t, i) => (
          <div key={i} className={`h-[20px] flex items-center justify-end whitespace-nowrap border-b border-[#c8c8c8] ${i % 2 === 0 ? "bg-[#e8e8e8]" : "bg-white"} ${i === 0 ? "pr-[53px]" : "pr-[39px]"}`}>{t}</div>
        ))}
        <div className="h-[7px] bg-[#e8e8e8]" />
      </div>
      <div className="w-[16px] bg-[#f0f0f0] flex flex-col items-center justify-between py-[4px]">
        <Chevron up c="#333" />
        <div className="w-[15px] h-[17px] bg-[#c8c8c8] mt-[-22px]" />
        <Chevron c="#333" />
      </div>
    </div>
    <div className="mt-[10px] ml-[-10px] w-[18px] h-[22px] bg-[#e1e1e1] border border-[#adadad]" />
  </div>
);

const TABS: [string, string, string][] = [
  ["IT40Cash,M15", "w-[96px]", ""],
  ["IT40Cash,M15", "w-[96px]", ""],
  ["IT40Cash,H1", "w-[88px]", ""],
  ["IT40Cash,H1", "w-[88px]", ""],
  ["IT40Cash,H1", "w-[88px]", ""],
  ["IT40Cash,H4", "w-[88px]", ""],
  ["IT40Cash,H4", "w-[89px]", ""],
  ["IT40Cash,H4", "w-[87px]", ""],
  ["IT40Cash,H4", "w-[89px]", ""],
  ["IT40Cash,H4", "w-[87px]", ""],
  ["IT40Cash,H1", "w-[88px]", ""],
  ["IT40Cash,H1", "w-[88px]", ""],
  ["IT40Cash,Daily", "w-[100px]", ""],
];
const Tabs = () => (
  <div className="h-[22px] bg-[#f0f0f0] border-t border-black flex shrink-0 text-[11.4px] text-[#6a6a6a] whitespace-nowrap overflow-hidden">
    <div className="ml-[5px] w-[89px] h-[20px] bg-white border-x border-b border-black flex items-center pl-[11px] text-[#111]">IT40Cash,H1</div>
    {TABS.map(([t, w], i) => (
      <div key={i} className={`${w} h-[21px] flex items-center pl-[11px] shrink-0`}>
        <span className="flex-1">{t}</span>
        <div className="w-px h-[14px] bg-[#777]" />
      </div>
    ))}
    <div className="w-[59px] h-[21px] flex items-center pl-[11px] overflow-hidden shrink-0"><span>IT40Cash,H1</span></div>
    <div className="flex items-center gap-[13px] ml-[6px] shrink-0">
      <svg viewBox="0 0 6 10" width={6} height={10}><path d="M5 0V10L0 5Z" fill="#888" /></svg>
      <svg viewBox="0 0 6 10" width={6} height={10}><path d="M1 0V10L6 5Z" fill="#000" /></svg>
    </div>
  </div>
);

const St = ({ className, children }: { className: string; children?: React.ReactNode }) => (
  <div className={`h-[18px] border-l border-[#b0b0b0] flex items-center shrink-0 ${className}`}>{children}</div>
);
const Status = () => (
  <div className="h-[21px] bg-[#f0f0f0] flex items-center shrink-0 text-[11.4px] text-[#222] border-t border-white">
    <div className="w-[672px] pl-[2px] shrink-0">Per aiuto, premi F1</div>
    <St className="w-[116px] pl-[5px]">Default</St>
    <St className="w-[102px]" />
    <St className="w-[72px]" />
    <St className="w-[71px]" />
    <St className="w-[67px]" />
    <St className="w-[70px]" />
    <St className="w-[67px]" />
    <St className="pl-[5px] gap-[4px]">
      <svg viewBox="0 0 23 14" width={23} height={14}>
        {[0,1,2,3,4,5,6,7].map((i) => (
          <g key={i}>
            <rect x={i * 3} y={1} width={2} height={Math.max(2, 11 - i * 2)} fill="#6b7000" />
            <rect x={i * 3} y={Math.max(3, 12 - i * 2)} width={2} height={14 - Math.max(3, 12 - i * 2)} fill="#0f6a7a" />
          </g>
        ))}
      </svg>
      <span>5309/2 kb</span>
    </St>
  </div>
);

export default function App() {
  return (
    <div className="w-[1366px] h-[738px] flex flex-col overflow-hidden font-['Noto_Sans',sans-serif] bg-[#f0f0f0]">
      <Title />
      <Menu />
      <Toolbar />
      <div className="relative h-[624px] shrink-0">
        <Chart />
        <Dialog />
      </div>
      <Tabs />
      <Status />
    </div>
  );
}
